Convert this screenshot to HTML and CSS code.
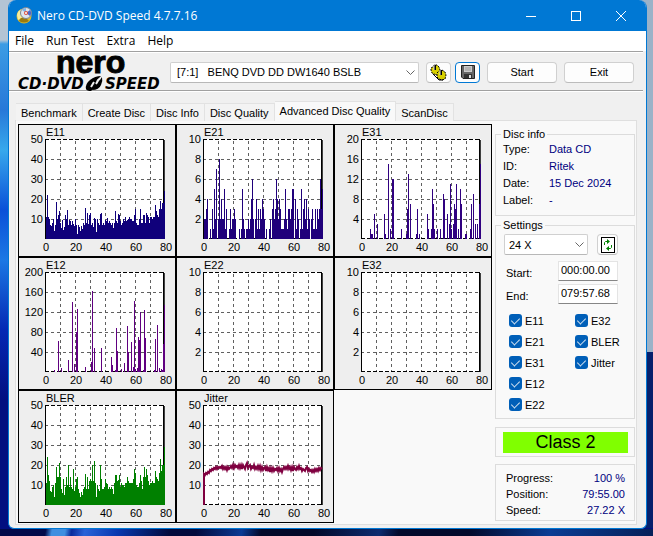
FILE: index.html
```html
<!DOCTYPE html>
<html lang="en">
<head>
    <meta charset="UTF-8">
    <meta name="viewport" content="width=device-width, initial-scale=1.0">
    <title>Nero CD-DVD Speed 4.7.7.16</title>
    <link rel="stylesheet" href="styles.css">
</head>
<body>
    <div class="window">
        <header class="titlebar">
            <svg class="app-icon" width="17" height="17" viewBox="0 0 17 17">
                <circle cx="8" cy="9" r="7.5" fill="#d9b92c"/>
                <path d="M1 8a7.500 7.500 0 0 1 5-6l2 7-6 4z" fill="#f6ec9c"/>
                <path d="M3 14q5 3 10 0l-3-3H5z" fill="#9a7a10"/>
                <circle cx="10" cy="6" r="5.500" fill="#dfe6ee" stroke="#7c8794"/>
                <path d="M10 6L6 3a5 5 0 0 1 4-2z" fill="#7fb5e8"/>
                <path d="M10 6l4-3a5 5 0 0 1 0 6z" fill="#4c68c8"/>
                <circle cx="10" cy="6" r="2" fill="#e0503c"/>
                <circle cx="10" cy="6" r="1" fill="#fff"/>
            </svg>
            <h1>Nero CD-DVD Speed 4.7.7.16</h1>
            <div class="window-buttons">
                <button type="button" aria-label="Minimize">
                    <svg width="10" height="10" viewBox="0 0 10 10"><path d="M0 5.500h10"/></svg>
                </button>
                <button type="button" aria-label="Maximize">
                    <svg width="10" height="10" viewBox="0 0 10 10"><rect x=".5" y=".5" width="9" height="9"/></svg>
                </button>
                <button type="button" aria-label="Close">
                    <svg width="10" height="10" viewBox="0 0 10 10"><path d="M0 0l10 10M10 0L0 10"/></svg>
                </button>
            </div>
        </header>

        <nav class="menubar">
            <a href="#">File</a>
            <a href="#">Run Test</a>
            <a href="#">Extra</a>
            <a href="#">Help</a>
        </nav>

        <div class="toolbar">
            <svg class="logo" width="145" height="38" viewBox="0 0 145 38">
                <text class="logo-nero" x="38" y="20">nero</text>
                <text class="logo-sub" x="0" y="36">CD·DVD</text>
                <text class="logo-sub" x="87" y="36">SPEED</text>
                <path d="M68 36q-1-5 4-9 5-4 11-4l-4 4q-3 5-3 8l-3 3q-4 0-5-2z"/>
                <path d="M74 37q7 0 9-5 2-4 1-8l-2 3q-5 1-6 5z"/>
                <path d="M73 34l3-5M78 31l3-5" stroke="#f0f0f0" stroke-width="2"/>
            </svg>
            <div class="select-wrap drive">
                <select aria-label="Drive">
                    <option>[7:1] &nbsp; BENQ DVD DD DW1640 BSLB</option>
                </select>
                <svg width="9" height="6" viewBox="0 0 9 6"><path d="M.5 .5l4 4 4-4"/></svg>
            </div>
            <button type="button" class="btn icon-btn" aria-label="Options">
                <svg width="17" height="17" viewBox="0 0 17 17">
                    <path d="M1 4l2-1 1-2 3 0 2 2 1 3-1 3-2 2-3-1-2-1-1-3z" fill="#d8d000" stroke="#000" stroke-dasharray="2 1"/>
                    <path d="M7 9l2-2 3-1 3 2 1 3-1 4-3 1-3-1-2-2z" fill="#d8d000" stroke="#000" stroke-dasharray="2 1"/>
                    <path d="M5 1v5M11 6v5" stroke="#000" stroke-width="2"/>
                    <path d="M4 1v5M10 6v5" stroke="#ddd"/>
                    <path d="M3 10l4 4 2 2h4" fill="none" stroke="#000"/>
                </svg>
            </button>
            <button type="button" class="btn icon-btn focused" aria-label="Save">
                <svg width="14" height="14" viewBox="0 0 14 14">
                    <path d="M.5 .5h13v13H2L.5 12z" fill="#666" stroke="#222"/>
                    <path d="M3 1h8v6H3z" fill="#ccc"/>
                    <path d="M4 3h6M4 5h6" stroke="#999"/>
                    <path d="M3 9h8v4H3z" fill="#333"/>
                    <path d="M8 10h2v3H8z" fill="#ddd"/>
                </svg>
            </button>
            <button type="button" class="btn text-btn">Start</button>
            <button type="button" class="btn text-btn">Exit</button>
        </div>

        <nav class="tabs">
            <a href="#" class="tab">Benchmark</a>
            <a href="#" class="tab">Create Disc</a>
            <a href="#" class="tab">Disc Info</a>
            <a href="#" class="tab">Disc Quality</a>
            <a href="#" class="tab active">Advanced Disc Quality</a>
            <a href="#" class="tab">ScanDisc</a>
        </nav>

        <main class="panel">
            <div class="charts" id="charts"></div>

            <aside class="side">
                <fieldset class="disc-info">
                    <legend>Disc info</legend>
                    <dl>
                        <dt>Type:</dt><dd>Data CD</dd>
                        <dt>ID:</dt><dd>Ritek</dd>
                        <dt>Date:</dt><dd>15 Dec 2024</dd>
                        <dt>Label:</dt><dd>-</dd>
                    </dl>
                </fieldset>

                <fieldset class="settings">
                    <legend>Settings</legend>
                    <div class="speed-row">
                        <div class="select-wrap">
                            <select aria-label="Speed">
                                <option>24 X</option>
                            </select>
                            <svg width="9" height="6" viewBox="0 0 9 6"><path d="M.5 .5l4 4 4-4"/></svg>
                        </div>
                        <button type="button" class="btn refresh" aria-label="Refresh">
                            <svg width="14" height="16" viewBox="0 0 14 16">
                                <rect x=".5" y=".5" width="13" height="15" fill="#fff" stroke="#000"/>
                                <path d="M3.500 8V5.500L4.500 4.500H7M10.500 8v2.500L9.500 11.500H7" fill="none" stroke="#008000"/>
                                <path d="M6 2l3 2.500L6 7zM8 9l-3 2.500L8 14z" fill="#008000"/>
                            </svg>
                        </button>
                    </div>
                    <div class="field">
                        <label for="start">Start:</label>
                        <input type="text" id="start" value="000:00.00">
                    </div>
                    <div class="field">
                        <label for="end">End:</label>
                        <input type="text" id="end" value="079:57.68">
                    </div>
                    <div class="checks">
                        <label><input type="checkbox" checked>E11</label>
                        <label><input type="checkbox" checked>E21</label>
                        <label><input type="checkbox" checked>E31</label>
                        <label><input type="checkbox" checked>E12</label>
                        <label><input type="checkbox" checked>E22</label>
                        <label><input type="checkbox" checked>E32</label>
                        <label><input type="checkbox" checked>BLER</label>
                        <label><input type="checkbox" checked>Jitter</label>
                    </div>
                </fieldset>

                <div class="box result">
                    <div class="class-label">Class 2</div>
                </div>

                <dl class="box progress">
                    <dt>Progress:</dt><dd>100 %</dd>
                    <dt>Position:</dt><dd>79:55.00</dd>
                    <dt>Speed:</dt><dd>27.22 X</dd>
                </dl>
            </aside>
        </main>
    </div>

    <script src="charts.js"></script>
</body>
</html>
```

FILE: styles.css
```css
* {
    box-sizing: border-box;
}
body {
    margin: 0;
    min-height: 100vh;
    padding: 0 6px 8px 8px;
    font-family: "Liberation Sans", Arial, sans-serif;
    font-size: 11px;
    line-height: 14px;
    color: #000;
    background:
        linear-gradient(90deg, transparent 50%, #06206c 50%) 0 352px / 100% 176px no-repeat,
        linear-gradient(90deg, transparent 50%, #9bb2c8 50%) 0 0 / 100% 352px no-repeat,
        linear-gradient(100deg, #020a4a 0 7%, #3f8fe0 8% 10%, #0a2a9c 11%, #2a62d8 13%, #0838b0 18%, #020a3c 26% 30%, #0a3a94 37%, #020828 40% 48%, #0c2c70 58%, #020a2c 61% 72%, #0a3c94 84%, #062058) 0 100% / 100% 8px no-repeat,
        linear-gradient(#b4c4d4 0 40px, #3c9ce4 44px, #2878d8 110px, #38a8ec 150px, #0a50d8 210px, #1c78e4 260px, #0428b4 330px, #020f80 400px);
}
h1, dl, dd, fieldset {
    margin: 0;
    padding: 0;
}
a {
    color: inherit;
    text-decoration: none;
}
button, input, select {
    font: inherit;
    color: inherit;
}

.window {
    border: 1px solid #0078d4;
    border-top: 0;
    border-radius: 8px 8px 6px 6px;
    background-color: #f0f0f0;
    overflow: hidden;
}

/* title bar */
.titlebar {
    display: flex;
    align-items: center;
    height: 31px;
    padding-left: 7px;
    background-color: #0078d4;
    color: #fff;
}
.titlebar h1 {
    flex: 1;
    margin-left: 4px;
    font: 12px "Open Sans", sans-serif;
}
.window-buttons {
    display: flex;
    margin-right: 3px;
}
.window-buttons button {
    display: flex;
    align-items: center;
    justify-content: center;
    width: 45px;
    height: 31px;
    padding: 0;
    border: 0;
    background: none;
}
.window-buttons svg {
    fill: none;
    stroke: #fff;
}

/* menu */
.menubar {
    display: flex;
    gap: 12px;
    height: 20px;
    padding-left: 6px;
    background-color: #fff;
    font: 12px/20px "Open Sans", sans-serif;
}

/* toolbar */
.toolbar {
    display: flex;
    align-items: center;
    gap: 7px;
    height: 40px;
    margin-right: 3px;
    padding: 2px 9px 0;
    border-top: 1px solid #a0a0a0;
    border-bottom: 1px solid #a0a0a0;
    box-shadow: 0 1px #fff, inset 0 1px #fff;
}
.logo {
    flex: none;
    overflow: visible;
}
.logo-nero {
    font: bold 32px "Liberation Sans", Arial, sans-serif;
    stroke: #000;
    stroke-width: 1px;
}
.logo-sub {
    font: italic bold 15px "DejaVu Sans", sans-serif;
}
.select-wrap {
    position: relative;
    flex: 1;
    min-width: 0;
}
.select-wrap select {
    display: block;
    appearance: none;
    width: 100%;
    height: 21px;
    padding: 0 20px 0 4px;
    border: 1px solid #d0d0d0;
    border-bottom-color: #b8b8b8;
    border-radius: 2px;
    background-color: #fff;
}
.drive select {
    padding-left: 6px;
}
.select-wrap svg {
    position: absolute;
    top: 8px;
    right: 4px;
    fill: none;
    stroke: #666;
    pointer-events: none;
}
.btn {
    display: flex;
    flex: none;
    align-items: center;
    justify-content: center;
    height: 21px;
    padding: 0;
    border: 1px solid #d0d0d0;
    border-bottom-color: #bcbcbc;
    border-radius: 4px;
    background-color: #fdfdfd;
}
.icon-btn {
    width: 25px;
}
.icon-btn + .icon-btn {
    margin-left: -3px;
}
.text-btn {
    width: 70px;
}
.focused {
    border-color: #0078d4;
}

/* tabs */
.tabs {
    display: flex;
    align-items: flex-end;
    height: 21px;
    margin-top: 9px;
    padding-left: 7px;
}
.tab {
    height: 18px;
    padding: 0 5px;
    border: 1px solid #e2e2e2;
    border-bottom: 0;
    border-left-width: 0;
    background-color: #f3f3f3;
    line-height: 18px;
}
.tab.active {
    height: 20px;
    background-color: #f9f9f9;
}

/* main panel */
.panel {
    display: grid;
    grid-template-columns: minmax(0, 1fr) 140px;
    gap: 3px;
    margin: -1px 9px 3px 6px;
    padding: 3px 1px 1px 2px;
    border: 1px solid #dfdfdf;
    background-color: #f9f9f9;
}
.charts {
    display: grid;
    grid-template-columns: repeat(3, minmax(0, 1fr));
    align-content: start;
}
.chart {
    border: 1px solid #000;
    background-color: #eee;
}
.chart svg {
    display: block;
    width: 100%;
    font-size: 11px;
}
.y-label {
    text-anchor: end;
}
.x-label {
    text-anchor: middle;
}
.grid-line {
    stroke: #606060;
    stroke-dasharray: 3 3;
}
.edge {
    stroke: #000;
}
.edge-right {
    stroke: #404040;
}
.edge-dashed {
    stroke: #000;
    stroke-dasharray: 4 2;
}

/* side column */
.side {
    padding-top: 3px;
}
fieldset, .box {
    border: 1px solid #dcdcdc;
}
legend {
    margin-left: 5px;
    padding: 0 2px;
}
.disc-info {
    margin-bottom: 2px;
}
.disc-info dl {
    display: grid;
    grid-template-columns: 46px 1fr;
    padding: 0 0 6px 7px;
    line-height: 17px;
}
dd {
    color: #000080;
}
.settings {
    padding: 2px 8px 3px;
}
.settings legend {
    margin-left: -3px;
}
.speed-row {
    display: flex;
    gap: 9px;
    margin-bottom: 6px;
    padding-right: 8px;
}
.refresh {
    width: 21px;
}
.field {
    display: flex;
    align-items: center;
    justify-content: space-between;
    margin-bottom: 3px;
    padding: 0 8px 0 2px;
}
.field label {
    padding-top: 3px;
}
.field input {
    width: 60px;
    height: 20px;
    padding: 0 2px 2px;
    border: 1px solid #e4e4e4;
    border-bottom-color: #868686;
    background-color: #fff;
}
.checks {
    display: grid;
    grid-template-rows: repeat(5, 21px);
    grid-template-columns: 66px 1fr;
    grid-auto-flow: column;
    margin-top: 6px;
    padding-left: 5px;
}
.checks label {
    display: flex;
    align-items: center;
    gap: 3px;
}
.checks input {
    display: flex;
    justify-content: center;
    appearance: none;
    width: 13px;
    height: 13px;
    margin: 0;
    border-radius: 3px;
    background-color: #005fb8;
}
.checks input:checked::after {
    content: "";
    width: 4px;
    height: 7px;
    margin-top: 2px;
    border: solid #cfe0f0;
    border-width: 0 1px 1px 0;
    transform: rotate(45deg);
}
.result {
    margin-top: 8px;
    padding: 4px 6px 3px 7px;
}
.class-label {
    background-color: #80ff00;
    font-size: 18px;
    line-height: 21px;
    text-align: center;
}
.progress {
    display: grid;
    grid-template-columns: 1fr auto;
    margin-top: 7px;
    padding: 5px 9px 2px 10px;
    line-height: 16px;
}
.progress dd {
    text-align: right;
}
```

FILE: charts.js
```javascript
// Plot area inside each 156x131 chart
const LEFT = 26;
const TOP = 14;
const WIDTH = 120;
const HEIGHT = 100;

// Dense series: one value for each column
const e11 = [
    11, 22, 11, 10, 7, 6.5, 8, 10, 4, 7, 18.5, 10, 12, 14, 8, 5.5, 9.5, 4.5, 6, 12,
    10, 14.5, 7, 9.5, 9, 7, 9, 7.5, 6.5, 10, 7, 2.5, 7, 6, 4, 6.5, 5, 8, 7, 15.5,
    8, 13, 7.5, 12, 13, 7, 8, 6, 10.5, 10, 3.5, 10, 8, 7, 12.5, 13, 7, 8, 7, 9.5,
    9, 10.5, 8, 9, 8, 7, 8, 5.5, 8, 14, 9, 8, 12.5, 12, 9, 7, 8, 10, 9, 11,
    9, 9.5, 10, 11, 10, 10, 9, 9, 12, 15, 8, 7, 7, 10, 15, 8, 8, 12, 12, 8,
    13, 12, 11, 8, 11, 11, 10, 11, 11, 17, 14, 12, 11, 15, 19, 15, 18, 18, 24
];
const bler = [
    11, 24, 15, 12, 7, 6.5, 9, 10, 4, 11, 19, 14, 14, 21, 14, 8, 6, 13, 5, 9,
    14, 10, 20, 9, 14, 9, 8, 18, 7, 9, 13, 14, 8, 6, 4, 6.5, 5, 8, 9, 15.5,
    8, 14, 8, 12, 13, 12, 20, 12, 22, 11, 4, 10, 8, 7, 20, 13, 8, 8, 9, 13,
    11, 10.5, 8, 9, 8, 9, 8, 5.5, 11, 15, 15, 12, 12.5, 15, 9, 11, 10, 10, 9, 11,
    11, 14, 12, 11, 11, 11, 11, 13, 18, 16, 10, 9, 9, 11, 15, 12, 8, 14, 19, 14,
    18, 15, 12, 10, 11, 11, 12, 11, 11, 17, 14, 13, 12, 16, 23, 17, 20, 20, 29
];
const e21 = [
    2, 2, 3, 4, 0, 0, 1, 0, 3, 1, 5, 2, 7, 0, 2, 8, 2, 4, 2, 2,
    5, 1, 3, 0, 0, 1, 3, 1, 2, 2, 3, 2, 0, 0, 0, 1, 0, 1, 5, 2,
    1, 0, 1, 1, 2, 1, 2, 4, 6, 2, 0, 2, 4, 1, 3, 1, 3, 2, 4, 3,
    2, 0, 1, 0, 0, 1, 2, 0, 3, 4, 2, 3, 6, 4, 2, 4, 3, 1, 1, 1,
    2, 5, 2, 1, 3, 3, 2, 3, 5, 5, 0, 4, 1, 3, 2, 0, 1, 5, 1, 3,
    4, 2, 4, 1, 3, 2, 0, 2, 3, 1, 1, 3, 1, 3, 2, 3, 6, 3, 5
];

// Sparse series: [column, value]
const e31 = [
    [8, 2], [9, 1], [10, 1], [12, 5], [15, 3], [22, 5], [23, 1], [26, 15], [28, 2], [30, 12], [31, 12],
    [39, 2], [44, 1], [45, 6], [46, 13], [48, 7], [54, 1], [55, 6], [57, 1], [65, 5], [66, 2],
    [69, 2], [70, 10], [71, 7], [72, 2], [75, 2], [78, 2], [81, 9], [82, 8], [85, 5], [87, 3],
    [88, 11], [89, 2], [91, 3], [92, 7], [93, 6], [94, 11], [96, 2], [98, 10], [99, 7],
    [103, 1], [104, 1], [108, 2], [109, 7], [111, 9], [113, 3], [115, 3], [117, 7], [118, 15]
];
const e12 = [
    [8, 3], [12, 62], [15, 8], [22, 24], [26, 140], [28, 16], [30, 80], [31, 126], [39, 10],
    [45, 20], [46, 162], [48, 48], [55, 48], [65, 30], [66, 14], [69, 4], [70, 88], [71, 42],
    [75, 5], [78, 18], [81, 92], [82, 40], [85, 60], [87, 10], [88, 142], [89, 5], [91, 8],
    [92, 70], [93, 64], [94, 120], [97, 4], [98, 124], [99, 68], [108, 4], [109, 66], [111, 94],
    [113, 8], [115, 6], [116, 3], [117, 56], [118, 134]
];
const jitter = [
    15.5, 15, 16, 15.5, 16.5, 16, 17.5, 17, 18, 17.5, 18.5, 18, 19, 18, 19, 18.5, 19, 18.5, 19.5, 18,
    19, 18, 19, 17.5, 19, 18, 18.5, 19.5, 18.5, 20, 18.5, 20, 19, 19.5, 18.5, 20, 18.5, 20, 18, 20,
    19, 18, 20, 21, 18.5, 19.5, 20, 18, 19, 18.5, 20, 18, 19, 18, 19.5, 18, 19.5, 17.5, 19, 17.5,
    18.5, 19, 17, 19, 17.5, 18.5, 16.5, 18.5, 17, 18.5, 17, 18, 17.5, 18.5, 17, 18.5, 17, 18, 16.5, 18,
    19, 18, 19, 18, 19.5, 18, 19, 17.5, 19, 17, 19, 18, 17.5, 19, 18, 19.5, 18, 18.5, 17, 18,
    17.5, 17, 18.5, 19, 17, 18, 17, 17.5, 16.5, 17.5, 16.5, 18, 17, 18, 17, 18.5, 17.5, 18.5, 18
];

const charts = [
    { title: 'E11', max: 50, color: '#10007b', bars: e11 },
    { title: 'E21', max: 10, color: '#20007b', bars: e21 },
    { title: 'E31', max: 20, color: '#300080', bars: e31 },
    { title: 'E12', max: 200, color: '#600080', bars: e12 },
    { title: 'E22', max: 10, color: '#600080', bars: [] },
    { title: 'E32', max: 10, color: '#600080', bars: [] },
    { title: 'BLER', max: 50, color: '#008000', bars: bler },
    { title: 'Jitter', max: 50, color: '#800040', line: jitter }
];

function line(x1, y1, x2, y2, cls) {
    return `<line class="${cls}" x1="${x1}" y1="${y1}" x2="${x2}" y2="${y2}"/>`;
}

function drawChart(chart) {
    const right = LEFT + WIDTH;
    const bottom = TOP + HEIGHT;
    let svg = `<rect x="${LEFT}" y="${TOP}" width="${WIDTH}" height="${HEIGHT}" fill="#fff"/>`;

    // grid
    for (let i = 1; i < 8; i++) {
        svg += line(LEFT + i * 15 + 0.5, TOP + 2, LEFT + i * 15 + 0.5, bottom, 'grid-line');
    }
    for (let i = 1; i < 5; i++) {
        svg += line(LEFT, TOP + i * 20 + 0.5, right - 2, TOP + i * 20 + 0.5, 'grid-line');
    }

    // frame
    svg += line(LEFT, TOP + 0.5, right, TOP + 0.5, 'edge-dashed');
    svg += line(LEFT, bottom - 0.5, right, bottom - 0.5, 'edge-dashed');
    svg += line(LEFT + 0.5, TOP, LEFT + 0.5, bottom, 'edge');
    svg += line(right - 1.5, TOP, right - 1.5, bottom, 'edge');
    svg += line(right - 0.5, TOP + 1, right - 0.5, bottom, 'edge-right');

    // data
    if (chart.bars) {
        chart.bars.forEach((bar, i) => {
            const [col, value] = Array.isArray(bar) ? bar : [i, bar];
            const h = Math.round(value / chart.max * HEIGHT);
            svg += `<rect x="${LEFT + 1 + col}" y="${bottom - h}" width="1" height="${h}" fill="${chart.color}"/>`;
        });
    }
    if (chart.line) {
        const points = chart.line.map((v, i) => `${LEFT + 1 + i},${bottom - v / chart.max * HEIGHT}`);
        svg += `<polyline points="${LEFT + 1},${bottom} ${points.join(' ')}" fill="none" stroke="${chart.color}" stroke-width="2"/>`;
    }

    // labels
    svg += `<text x="${LEFT + 1}" y="11">${chart.title}</text>`;
    for (let i = 1; i <= 5; i++) {
        svg += `<text class="y-label" x="${LEFT - 2}" y="${bottom - i * 20 + 4}">${chart.max / 5 * i}</text>`;
    }
    for (let i = 0; i <= 4; i++) {
        svg += `<text class="x-label" x="${LEFT + 1 + i * 30}" y="${bottom + 12}">${i * 20}</text>`;
    }

    return `<div class="chart"><svg viewBox="0 0 156 131" role="img" aria-label="${chart.title}">${svg}</svg></div>`;
}

document.getElementById('charts').innerHTML = charts.map(drawChart).join('');
```
